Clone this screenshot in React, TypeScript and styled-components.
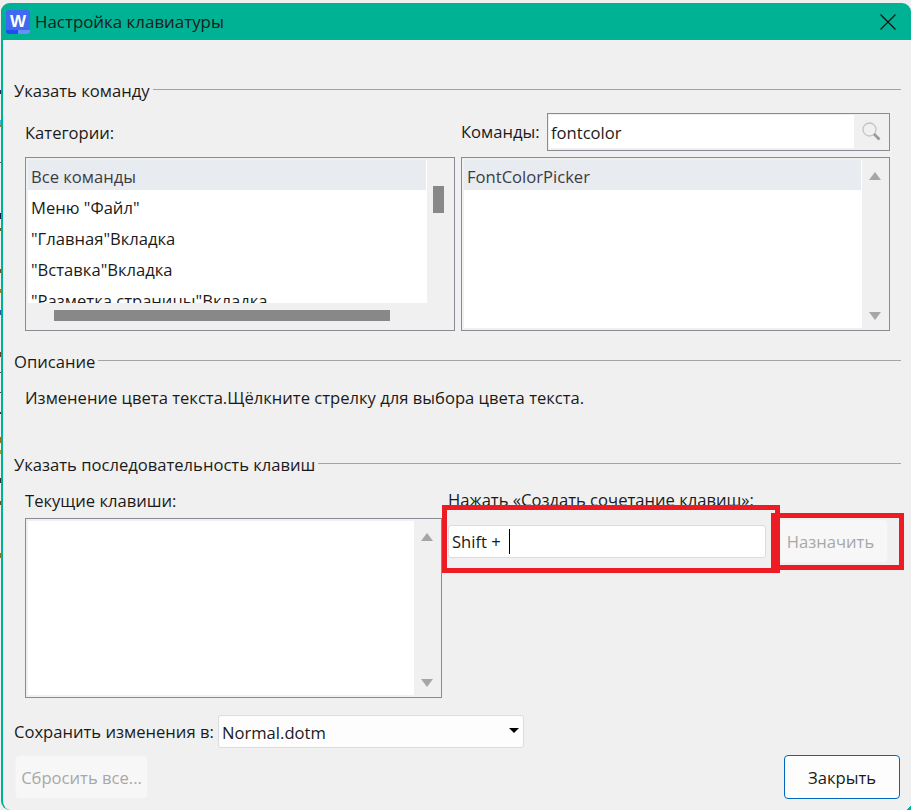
import React from 'react';
import styled, { createGlobalStyle } from 'styled-components';

const GlobalStyle = createGlobalStyle`
	html, body {
		margin: 0;
		padding: 0;
		background: #efefef;
	}
	body {
		font-family: "Open Sans", "Noto Sans", sans-serif;
		font-size: 16.6px;
		color: #1a1a1a;
	}
`;

// bits of the document behind the dialog that stick out on the left edge
const edgeMarks: [number, number, string][] = [
	[50, 54, '#1c2a6e'],
	[80, 85, '#3fb6c4'],
	[85, 87, '#b5701a'],
	[122, 123, '#555'],
	[173, 179, '#1a1a4e'],
	[188, 191, '#6a5a2a'],
	[229, 233, '#7a4a1a'],
	[249, 253, '#b5701a'],
	[270, 275, '#1c5aa8'],
	[312, 317, '#7a3a2a'],
	[332, 333, '#444'],
	[352, 353, '#444'],
	[372, 374, '#333'],
	[397, 403, '#a8680f'],
	[410, 414, '#b8902a'],
	[438, 443, '#333'],
	[461, 465, '#7a4a1a'],
	[513, 518, '#a8680f'],
];

const edgeGradient = edgeMarks
	.map(([from, to, color]) => `#efefef ${from}px, ${color} ${from}px, ${color} ${to}px, #efefef ${to}px`)
	.join(', ');

const Screen = styled.div`
	width: 911px;
	height: 810px;
	overflow: hidden;
	box-sizing: border-box;
	padding: 3px 0 0 1px;
	background: linear-gradient(to bottom, ${edgeGradient}) left top / 1px 770px no-repeat #efefef;
	background-position: 0 40px;
`;

const Dialog = styled.div`
	height: 807px;
	box-sizing: border-box;
	border-left: 2px solid #00b294;
	border-radius: 9px 9px 0 9px;
	background: #f0f0f0;
	display: flex;
	flex-direction: column;
	position: relative;

	&::after {
		content: '';
		position: absolute;
		right: 0;
		bottom: 0;
		width: 4px;
		height: 4px;
		background: linear-gradient(135deg, transparent 50%, #00b294 50%);
	}
`;

const TitleBar = styled.div`
	height: 37px;
	flex: none;
	margin-left: -2px;
	padding: 0 15px 0 5px;
	background: #00b294;
	border-radius: 9px 9px 0 0;
	display: flex;
	align-items: center;
	gap: 5px;
	font-size: 16.9px;
	color: #1b1b1b;
`;

const TitleText = styled.span`
	flex: 1;
`;

const Content = styled.div`
	padding: 0 10px 0 11px;
	display: flex;
	flex-direction: column;
`;

const GroupTitle = styled.div<{ $top: number }>`
	height: 22px;
	line-height: 22px;
	margin-top: ${p => p.$top}px;
	display: flex;
	align-items: center;
	gap: 3px;
	white-space: nowrap;

	&::after {
		content: '';
		flex: 1;
		height: 1px;
		margin-bottom: 3px;
		background: #a3a3a3;
	}
`;

const CommandGrid = styled.div`
	margin-top: 11px;
	padding: 0 11px;
	display: grid;
	grid-template-columns: 430px 429px;
	column-gap: 6px;
	row-gap: 6px;
`;

const Label = styled.div`
	height: 22px;
	line-height: 22px;
	white-space: nowrap;
`;

const CellLabel = styled(Label)`
	height: 38px;
	line-height: 39px;
`;

const SearchRow = styled.div`
	height: 38px;
	display: flex;
	align-items: center;
	justify-content: space-between;
`;

const SearchBox = styled.div`
	width: 343px;
	height: 38px;
	box-sizing: border-box;
	border: 1px solid #8a8a92;
	padding: 1px 0 2px 1px;
	display: flex;
	align-items: stretch;
`;

const SearchField = styled.div`
	width: 305px;
	background: #fff;
	line-height: 35px;
	padding-left: 2px;
	box-sizing: border-box;
`;

const SearchButton = styled.div`
	flex: 1;
	display: flex;
	align-items: center;
	justify-content: center;
`;

const ListFrame = styled.div<{ $height: number }>`
	height: ${p => p.$height}px;
	box-sizing: border-box;
	border: 1px solid #8a8a92;
	padding: 2px;
	display: flex;
	position: relative;
`;

const ListBody = styled.div<{ $bottom?: number }>`
	flex: 1;
	min-width: 0;
	margin-bottom: ${p => p.$bottom ?? 0}px;
	background: #fff;
	overflow: hidden;
`;

const ListItem = styled.div<{ $selected?: boolean }>`
	height: 31px;
	line-height: 35px;
	padding-left: 3px;
	white-space: nowrap;
	margin-right: 1px;
	color: ${p => (p.$selected ? '#3c3c44' : '#1a1a1a')};
	background: ${p => (p.$selected ? '#e8ebef' : 'transparent')};
	&:first-child {
		height: 30px;
		line-height: 34px;
	}
`;

const VScroll = styled.div<{ $bottom?: number }>`
	width: 25px;
	flex: none;
	margin-bottom: ${p => p.$bottom ?? 0}px;
	display: flex;
	flex-direction: column;
	align-items: center;
	justify-content: space-between;
	padding: 12px 0 8px;
	box-sizing: border-box;
`;

const Arrow = styled.div<{ $down?: boolean }>`
	width: 0;
	height: 0;
	border-left: 6px solid transparent;
	border-right: 6px solid transparent;
	border-bottom: ${p => (p.$down ? '0' : '8px solid #a6a6a6')};
	border-top: ${p => (p.$down ? '8px solid #a6a6a6' : '0')};
`;

const VThumb = styled.div`
	width: 11px;
	height: 27px;
	margin: 14px 0 0 -2px;
	background: #888;
`;

const HScroll = styled.div`
	position: absolute;
	left: 28px;
	bottom: 9px;
	width: 336px;
	height: 11px;
	background: #888;
`;

const Description = styled.div`
	margin-top: 14px;
	padding-left: 11px;
	height: 22px;
	line-height: 22px;
`;

const KeysRow = styled.div`
	margin-top: 14px;
	padding-left: 11px;
	display: grid;
	grid-template-columns: 417px 1fr;
	column-gap: 6px;
`;

const KeysColumn = styled.div`
	display: flex;
	flex-direction: column;
	position: relative;
`;

const KeysLabel = styled(Label)`
	margin-bottom: 6px;
`;

const PressLabel = styled(Label)`
	margin-top: -1px;
	margin-bottom: 8px;
`;

const AssignRow = styled.div`
	display: flex;
	align-items: center;
	gap: 7px;
	width: 440px;
`;

const KeyInput = styled.div`
	width: 318px;
	height: 33px;
	box-sizing: border-box;
	border: 1px solid #dcdcdc;
	border-radius: 3px;
	background: #fff;
	padding: 1px 0 0 3px;
	display: flex;
	align-items: center;
	gap: 8px;
`;

const Caret = styled.span`
	width: 1px;
	height: 25px;
	margin-top: -1px;
	background: #000;
`;

const Button = styled.div<{ $disabled?: boolean; $width: number }>`
	width: ${p => p.$width}px;
	height: 44px;
	flex: none;
	box-sizing: border-box;
	border-radius: 4px;
	border: 1px solid ${p => (p.$disabled ? '#f2f2f2' : '#0067c0')};
	background: ${p => (p.$disabled ? '#f7f7f7' : '#fdfdfd')};
	color: ${p => (p.$disabled ? '#a8a8a8' : '#1a1a1a')};
	display: flex;
	align-items: center;
	justify-content: center;
	padding-top: 1px;
	white-space: nowrap;
`;

const RedFrame = styled.div<{ $left: number; $top: number; $w: number; $h: number }>`
	position: absolute;
	left: ${p => p.$left}px;
	top: ${p => p.$top}px;
	width: ${p => p.$w}px;
	height: ${p => p.$h}px;
	box-sizing: border-box;
	border: 5px solid #ed1c24;
	pointer-events: none;
`;

const SaveRow = styled.div`
	margin-top: 17px;
	display: flex;
	align-items: center;
`;

const SaveLabel = styled(Label)`
	width: 204px;
	flex: none;
	margin-top: 1px;
`;

const SelectBox = styled.div`
	width: 306px;
	height: 33px;
	box-sizing: border-box;
	border: 1px solid #dcdcdc;
	border-radius: 3px;
	background: #fdfdfd;
	padding: 1px 4px 0 3px;
	display: flex;
	align-items: center;
	justify-content: space-between;
`;

const SelectArrow = styled.div`
	width: 0;
	height: 0;
	margin: 0 0 4px;
	border-left: 5px solid transparent;
	border-right: 5px solid transparent;
	border-top: 5px solid #000;
`;

const Footer = styled.div`
	margin-top: 7px;
	padding: 0 1px;
	display: flex;
	justify-content: space-between;
`;

const WordLogo = () => (
	<svg width="24" height="24" viewBox="0 0 24 24">
		<rect width="24" height="24" rx="3" fill="#3f68f4" />
		<path d="M0 20h12v4H3a3 3 0 0 1-3-3z" fill="#1f4fe8" />
		<path d="M12 20h12v1a3 3 0 0 1-3 3h-9z" fill="#6b8ffa" />
		<text x="12" y="17" textAnchor="middle" fontFamily="Liberation Sans" fontWeight="700" fontSize="17" fill="#fff">
			W
		</text>
	</svg>
);

const CloseIcon = () => (
	<svg width="16" height="16" viewBox="0 0 16 16">
		<path d="M.5.5l15 15M15.5.5l-15 15" stroke="#111" strokeWidth="1.2" fill="none" />
	</svg>
);

const SearchIcon = () => (
	<svg width="19" height="19" viewBox="0 0 19 19">
		<circle cx="7.5" cy="7.5" r="6.5" fill="none" stroke="#c3c3c3" strokeWidth="1.3" />
		<path d="M12 12l5.5 5.5" stroke="#9a9a9a" strokeWidth="2.6" />
	</svg>
);

const categories = ['Меню "Файл"', '"Главная"Вкладка', '"Вставка"Вкладка', '"Разметка страницы"Вкладка'];

export default function App() {
	return (
		<>
			<GlobalStyle />
			<Screen>
				<Dialog>
					<TitleBar>
						<WordLogo />
						<TitleText>Настройка клавиатуры</TitleText>
						<CloseIcon />
					</TitleBar>
					<Content>
						<GroupTitle $top={40}>Указать команду</GroupTitle>
						<CommandGrid>
							<CellLabel>Категории:</CellLabel>
							<SearchRow>
								<Label>Команды:</Label>
								<SearchBox>
									<SearchField>fontcolor</SearchField>
									<SearchButton>
										<SearchIcon />
									</SearchButton>
								</SearchBox>
							</SearchRow>
							<ListFrame $height={174}>
								<ListBody $bottom={25}>
									<ListItem $selected>Все команды</ListItem>
									{categories.map(name => (
										<ListItem key={name}>{name}</ListItem>
									))}
								</ListBody>
								<VScroll $bottom={25}>
									<VThumb />
								</VScroll>
								<HScroll />
							</ListFrame>
							<ListFrame $height={174}>
								<ListBody>
									<ListItem $selected>FontColorPicker</ListItem>
								</ListBody>
								<VScroll>
									<Arrow />
									<Arrow $down />
								</VScroll>
							</ListFrame>
						</CommandGrid>

						<GroupTitle $top={20}>Описание</GroupTitle>
						<Description>Изменение цвета текста.Щёлкните стрелку для выбора цвета текста.</Description>

						<GroupTitle $top={45}>Указать последовательность клавиш</GroupTitle>
						<KeysRow>
							<KeysColumn>
								<KeysLabel>Текущие клавиши:</KeysLabel>
								<ListFrame $height={180}>
									<ListBody />
									<VScroll>
										<Arrow />
										<Arrow $down />
									</VScroll>
								</ListFrame>
							</KeysColumn>
							<KeysColumn>
								<PressLabel>Нажать «Создать сочетание клавиш»:</PressLabel>
								<AssignRow>
									<KeyInput>
										Shift +
										<Caret />
									</KeyInput>
									<Button $disabled $width={115}>
										Назначить
									</Button>
								</AssignRow>
								<RedFrame $left={-6} $top={15} $w={338} $h={68} />
								<RedFrame $left={323} $top={23} $w={133} $h={57} />
							</KeysColumn>
						</KeysRow>

						<SaveRow>
							<SaveLabel>Сохранить изменения в:</SaveLabel>
							<SelectBox>
								Normal.dotm
								<SelectArrow />
							</SelectBox>
						</SaveRow>

						<Footer>
							<Button $disabled $width={133}>
								Сбросить все...
							</Button>
							<Button $width={116}>Закрыть</Button>
						</Footer>
					</Content>
				</Dialog>
			</Screen>
		</>
	);
}
